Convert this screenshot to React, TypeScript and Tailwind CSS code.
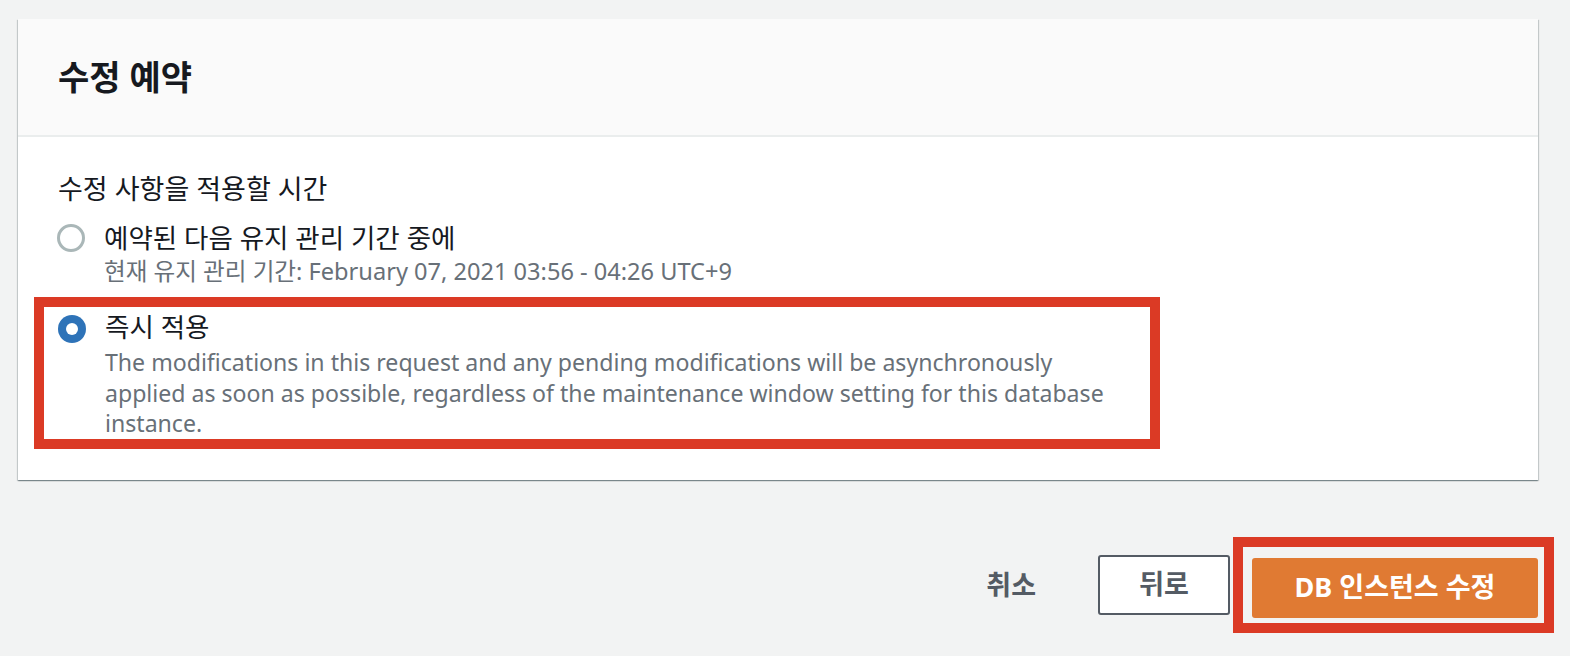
import React from "react";

const font = { fontFamily: '"Noto Sans", "Noto Sans CJK KR", sans-serif' };

function Radio({ checked }: { checked: boolean }) {
  if (checked) {
    return (
      <span className="flex h-[28px] w-[28px] shrink-0 items-center justify-center rounded-full bg-[#2e73b8]">
        <span className="h-[12px] w-[12px] rounded-full bg-white" />
      </span>
    );
  }
  return <span className="block h-[28px] w-[28px] shrink-0 rounded-full border-[3px] border-[#aab7b8] bg-white" />;
}

export default function App() {
  return (
    <div className="h-[656px] w-full overflow-hidden bg-[#f2f3f3]" style={font}>
      <div className="pl-[18px] pr-[32px] pt-[19px]">
        <div className="w-[1520px] bg-white shadow-[0_1px_1px_0_rgba(0,28,36,0.3),1px_1px_1px_0_rgba(0,28,36,0.15),-1px_1px_1px_0_rgba(0,28,36,0.15)]">
          <div className="flex h-[118px] items-center border-b-2 border-[#eaeded] bg-[#fafafa] pl-[40px]">
            <h2 className="text-[34px] font-bold leading-[42px] text-[#16191f]">수정 예약</h2>
          </div>
          <div className="pb-[31px] pl-[16px] pt-[34px]">
            <div className="pl-[24px] text-[27px] leading-[36px] text-[#16191f]">수정 사항을 적용할 시간</div>
            <div className="mt-[13px] flex pl-[23px]">
              <div className="flex h-[36px] items-center">
                <Radio checked={false} />
              </div>
              <div className="ml-[19px]">
                <div className="text-[26.5px] leading-[36px] text-[#16191f]">예약된 다음 유지 관리 기간 중에</div>
                <div className="text-[23.6px] leading-[30px] text-[#687078]">
                  현재 유지 관리 기간: February 07, 2021 03:56 - 04:26 UTC+9
                </div>
              </div>
            </div>
            <div className="mt-[11px] flex w-[1126px] border-[10px] border-[#db3a25] pl-[14px] pt-[2px]">
              <div className="flex h-[40px] items-center">
                <Radio checked={true} />
              </div>
              <div className="ml-[19px]">
                <div className="text-[26.5px] leading-[36px] text-[#16191f]">즉시 적용</div>
                <div className="mt-[2px] text-[23.1px] leading-[30.5px] text-[#687078]">
                  The modifications in this request and any pending modifications will be asynchronously
                  <br />
                  applied as soon as possible, regardless of the maintenance window setting for this database
                  <br />
                  instance.
                </div>
              </div>
            </div>
          </div>
        </div>
      </div>
      <div className="mt-[57px] flex items-center justify-end pr-[16px]">
        <button className="mr-[62px] text-[27px] font-bold leading-[36px] text-[#545b64]">취소</button>
        <button className="mr-[3px] flex h-[60px] w-[132px] items-center justify-center rounded-[3px] border-2 border-[#545b64] bg-white text-[27px] font-bold text-[#545b64]">
          뒤로
        </button>
        <div className="border-[10px] border-[#db3a25] pb-[5px] pl-[9px] pr-[6px] pt-[11px]">
          <button className="flex h-[60px] w-[286px] items-center justify-center rounded-[3px] bg-[#e07a33] text-[27px] font-bold text-white">
            DB 인스턴스 수정
          </button>
        </div>
      </div>
    </div>
  );
}
